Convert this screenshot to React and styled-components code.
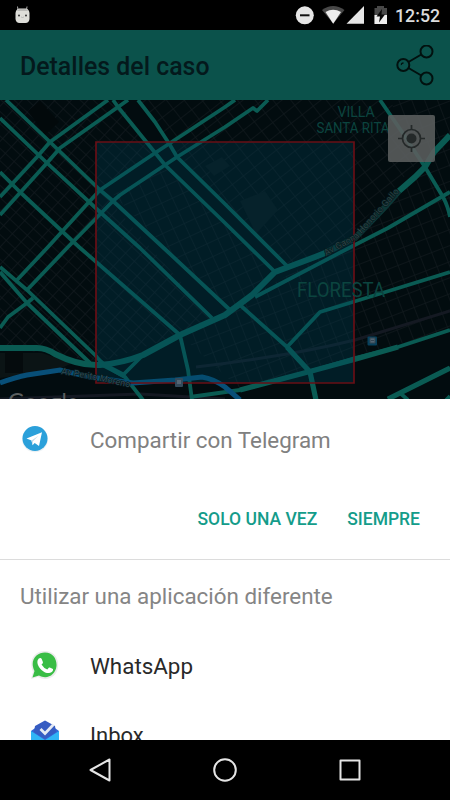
import React from 'react';
import styled, { createGlobalStyle } from 'styled-components';

const Global = createGlobalStyle`
  * { box-sizing: border-box; }
  body { margin: 0; background: #000; }
  svg { display: block; }
  button { border: 0; padding: 0; background: none; font: inherit; color: inherit; display: block; }
`;

const Screen = styled.main`
  width: 450px;
  height: 800px;
  display: flex;
  flex-direction: column;
  overflow: hidden;
  background: #fff;
  font-family: Roboto, sans-serif;
`;

const StatusBar = styled.header`
  height: 30px;
  flex: none;
  display: flex;
  align-items: center;
  padding: 0 10px 0 14px;
  background: #000;
  color: #dcdcdc;
`;

const StatusIcons = styled.div`
  display: flex;
  margin-left: auto;
`;

const Clock = styled.time`
  width: 45px;
  margin-left: 8px;
  padding-top: 1px;
  font-size: 17.8px;
  line-height: 30px;
  font-weight: 500;
  white-space: nowrap;
`;

const AppBar = styled.div`
  height: 70px;
  flex: none;
  display: flex;
  align-items: center;
  justify-content: space-between;
  padding: 1px 15px 0 20px;
  background: #0b524b;
`;

const Title = styled.h1`
  margin: 0;
  padding-top: 2px;
  font-size: 24.9px;
  line-height: 32px;
  font-weight: 500;
  color: #04191c;
`;

const MapView = styled.section`
  position: relative;
  height: 299px;
  flex: none;
  overflow: hidden;
  background: #020c0f;
`;

const MapCanvas = styled.svg`
  width: 450px;
  height: 299px;
`;

const LocateButton = styled.button`
  position: absolute;
  top: 15px;
  right: 15px;
  width: 47px;
  height: 47px;
  border-radius: 2px;
  background: rgba(91, 94, 94, 0.88);
`;

const Chosen = styled.section`
  height: 161px;
  flex: none;
  display: flex;
  flex-direction: column;
  justify-content: space-between;
  border-bottom: 1px solid #dcdcdc;
`;

const AppRow = styled.div`
  height: ${(p) => p.$height}px;
  flex: none;
  display: grid;
  grid-template-columns: ${(p) => p.$inset}px 1fr;
  align-items: center;
`;

const IconCell = styled.span`
  display: flex;
  padding-left: ${(p) => p.$left}px;
  padding-bottom: 2px;
`;

const Label = styled.span`
  font-size: ${(p) => p.$size || 22.4}px;
  line-height: 30px;
  color: ${(p) => (p.$muted ? '#808080' : '#292929')};
  white-space: nowrap;
`;

const Actions = styled.div`
  display: flex;
  justify-content: flex-end;
  gap: 30px;
  padding: 0 30px 28px 0;
`;

const Action = styled.button`
  font-size: 17.5px;
  line-height: 24px;
  font-weight: 500;
  color: #149c8a;
  white-space: nowrap;
`;

const Alternatives = styled.section`
  height: 180px;
  flex: none;
  overflow: hidden;
`;

const Subheading = styled.h2`
  height: 71px;
  margin: 0;
  padding: 21px 20px 0;
  font-size: 22.4px;
  line-height: 30px;
  font-weight: 400;
  color: #858585;
`;

const NavBar = styled.nav`
  height: 60px;
  flex: none;
  display: grid;
  grid-template-columns: repeat(3, 125px);
  justify-content: center;
  align-items: center;
  justify-items: center;
  background: #000;
`;

const highways = [
  'M450 135 L434 152 L425 167 L415 177 L399 191',
  'M325 253 L315 257 L275 272 L252 295 L225 315 L180 335 L143 355 C125 362 112 364 100 365 C83 366 65 359 55 354 Q46 348 37 348 L0 348',
];

const roads = [
  'M6 100 L50 142 L100 190 L113 201 L168 252 L230 310',
  'M0 118 L47 163 L100 212 L140 248 L212 318',
  'M0 172 L20 192 L79 247 L180 335',
  'M108 100 L50 142 L37 157 L0 197',
  'M128 100 L60 148 L47 163 L0 215',
  'M113 100 L118 107 L165 165 L225 223 L275 272',
  'M138 100 L155 122 L170 145 L177 157 L225 204 L288 267',
  'M235 100 L225 107 L155 153 L100 190 L88 203 L48 247 L17 280',
  'M268 100 L257 111 L253 108 L225 127 L177 157 L120 195 L113 201 L68 247 L27 290',
  'M380 100 L402 132 L425 167 L443 197 Q448 206 450 217',
  'M450 192 L388 228 L345 250 L255 297',
  'M450 272 L392 290 L320 312 L287 347',
  'M240 305 L287 347 L310 372 L316 400',
  'M450 330 L398 347 L355 358 L308 372 L240 390 L190 397',
  'M450 368 L388 399 M400 393 L408 400',
  'M450 396 L446 400',
  'M180 335 L188 370 L192 400',
  'M0 267 L27 290 L96 356 Q102 365 125 377 L143 400',
  'M0 272 L27 303 L90 363',
  'M33 298 L27 303 L8 317 L0 328',
  'M143 355 L122 376',
];

function StreetMap() {
  return (
    <MapCanvas viewBox="0 100 450 299" aria-label="Mapa">
      <defs>
        <pattern id="westBlocks" width="12" height="9" patternUnits="userSpaceOnUse" patternTransform="rotate(43)">
          <path d="M0 0H12M0 0V9" fill="none" stroke="#11191d" strokeWidth="1.6" />
        </pattern>
        <pattern id="northBlocks" width="12" height="14" patternUnits="userSpaceOnUse" patternTransform="rotate(52)">
          <path d="M0 0H12M0 0V14" fill="none" stroke="#11191d" strokeWidth="1.5" />
        </pattern>
        <pattern id="centralBlocks" width="12" height="14" patternUnits="userSpaceOnUse" patternTransform="rotate(-25)">
          <path d="M0 0H12M0 0V14" fill="none" stroke="#11191d" strokeWidth="1.5" />
        </pattern>
        <pattern id="eastBlocks" width="12" height="15" patternUnits="userSpaceOnUse" patternTransform="rotate(-21)">
          <path d="M0 0H12M0 0V15" fill="none" stroke="#11191d" strokeWidth="1.5" />
        </pattern>
        <path id="avenueNorth" d="M326 256 L357 239 L385 208 L401 190" />
        <path id="avenueWest" d="M61 374 L91 379 L133 388" />
      </defs>
      <path d="M0 100H118L155 153L100 190L212 318L180 335L100 362L0 346Z" fill="url(#westBlocks)" />
      <path d="M113 195L165 165L275 272L230 310Z" fill="url(#centralBlocks)" />
      <path d="M138 100H390L420 160L350 235L288 267L177 157Z" fill="url(#northBlocks)" />
      <path d="M390 100H450V330L240 389L180 335L252 295L355 238L420 170Z" fill="url(#eastBlocks)" />
      <path d="M28 111L40 101L59 122L45 135Z" fill="#02090b" />
      <path d="M0 353H42L72 363L58 370L0 378Z" fill="#0b1415" />
      <path d="M5 352H23V373H5Z" fill="#050b0d" />
      <path d="M205 166L222 157L230 166L214 176ZM240 201L265 191L278 210L256 234Z" fill="#091316" />
      <path d="M196 367Q290 356 355 340L450 311M0 399L140 394L225 399" fill="none" stroke="#141922" strokeWidth="3" />
      <g fill="none" stroke="#0a5b53" strokeWidth="3.8" strokeLinejoin="round">
        {roads.map((d) => <path key={d} d={d} />)}
      </g>
      <path d="M98 362L125 376M240 390L308 372L356 359L398 347M287 347L310 372L316 400M388 399L450 368" fill="none" stroke="#0a5b53" strokeWidth="5.2" />
      <g fill="none" stroke="#0a5b53" strokeWidth="6" strokeLinejoin="round">
        {highways.map((d) => <path key={d} d={d} />)}
      </g>
      <path d="M399 191L385 207L355 238L325 253" fill="none" stroke="#0d3736" strokeWidth="6" />
      <path d="M0 383Q16 377 27 375L60 370L90 377L133 383L175 380L202 377Q214 379 225 387L240 400" fill="none" stroke="#084f78" strokeWidth="5" />
      <path d="M96 142H354V383H96Z" fill="#00445c" fillOpacity=".3" stroke="#680f16" strokeWidth="1.7" />
      <g fill="#0b443f" fontFamily="Roboto, sans-serif" textAnchor="middle">
        <text x="356" y="117" fontSize="14.5" textLength="37" lengthAdjust="spacingAndGlyphs">VILLA</text>
        <text x="353" y="133" fontSize="14.5" textLength="73" lengthAdjust="spacingAndGlyphs">SANTA RITA</text>
        <text x="341" y="296.500" fontSize="19.5" textLength="88" lengthAdjust="spacingAndGlyphs">FLORESTA</text>
      </g>
      <g fill="#2d4547" stroke="#071a1d" strokeWidth="1.3" paintOrder="stroke" fontFamily="Roboto, sans-serif" fontSize="9">
        <text><textPath href="#avenueNorth" textLength="99">Av Gaona Honorio Gallo</textPath></text>
        <text fill="#2f4b55"><textPath href="#avenueWest" textLength="70">Av Perito Moreno</textPath></text>
      </g>
      <rect x="367.500" y="336.500" width="9.500" height="9" rx="1" fill="#07405c" />
      <path d="M370 338H375V343H370ZM371 340.500H374" fill="#536675" stroke="#344653" />
      <rect x="175" y="378" width="8" height="9" rx="1" fill="#334a5b" />
      <path d="M177 380H181V384H177Z" fill="#536675" />
      <text x="8" y="410" fontFamily="Lato, sans-serif" fontSize="22.5" fill="#5a5e5e">Google</text>
    </MapCanvas>
  );
}

function AndroidIcon() {
  return (
    <svg width="17" height="20" viewBox="0 0 17 20">
      <path d="M4 5L3.500 1.500M12.500 5L13 1.500" stroke="#aaa" strokeWidth="1" />
      <path d="M1.500 8Q2 4 5 3.500H12Q15 4 15.500 8V14Q15 18 11.500 18H5.500Q2 18 1.500 14Z" fill="#deded9" />
      <path d="M3 6Q4 4 6 4H11Q13.500 4 14 6Z" fill="#babab7" />
      <circle cx="5" cy="10.500" r="1" fill="#333" /><circle cx="12" cy="10.500" r="1" fill="#333" />
      <path d="M7 12Q8.500 13 10 12" fill="none" stroke="#aaa" strokeWidth=".7" />
    </svg>
  );
}

function SignalIcons() {
  return (
    <svg width="94" height="24" viewBox="293 3 94 24">
      <circle cx="304.800" cy="15.300" r="9" fill="#e6e6e6" />
      <path d="M300 15.300H309.500" stroke="#111" strokeWidth="2" />
      <path d="M322 10Q333 2 344.500 10L333.200 23.500Z" fill="#484848" />
      <path d="M325.500 12Q333 7.500 341 12L333.200 23.700Z" fill="#ececec" />
      <path d="M346.500 23.700L364 6V23.700Z" fill="#e6e6e6" />
      <path d="M374.500 8H377V6H384V8H387V24H374.500Z" fill="#484848" />
      <path d="M374.500 15H387V24H374.500Z" fill="#eee" />
      <path d="M382 9L376.500 16.500H380L379 22.500L385 14.500H381.500Z" fill="#080808" />
    </svg>
  );
}

function ShareIcon() {
  return (
    <svg width="40" height="42" viewBox="395 45 40 42" fill="none" stroke="#02110f" strokeWidth="2">
      <circle cx="426.500" cy="51.500" r="6" /><circle cx="403.300" cy="65" r="6" /><circle cx="426.500" cy="78.500" r="6" />
      <path d="M408.500 62L421.300 54.500M408.500 68L421.300 75.500" />
      <path d="M401.500 65Q401 63 403.500 63" strokeWidth="1.3" />
    </svg>
  );
}

function TelegramIcon() {
  return (
    <svg width="30" height="30" viewBox="20 424 30 30">
      <circle cx="35" cy="439.300" r="13" fill="#dfe7ec" opacity=".6" />
      <circle cx="35" cy="438.500" r="12.500" fill="#2ba0da" />
      <path d="M26.500 438.500L42 432.300L39 446L34.700 443L32.500 445.200L31.500 440.500Z" fill="#fff" />
      <path d="M31.500 440.500L38.500 435.800L33 441.300L32.500 445.200Z" fill="#c5dcea" />
    </svg>
  );
}

function WhatsAppIcon() {
  return (
    <svg width="30" height="30" viewBox="30 650 30 30">
      <path d="M31 679L33 672C27 657 38 650 46 651C55 652 59 659 58 667C57 677 47 682 38 677Z" fill="#ececec" />
      <path d="M32.500 677.500L34.500 671C29 660 37 652.500 45 652.500C53 652.500 57 659 56.500 666C55.500 675 47 680 39 675.500Z" fill="#39bd45" />
      <path d="M38.800 658.500Q41 657.500 41.700 659L43 662.200Q43 663.500 41.500 664.500Q44 668.500 47.300 669.500L49 667.500Q50 667 53 669C53.500 672 50 673.500 47 673C41 671.500 34.500 663 38.800 658.500Z" fill="#fff" />
    </svg>
  );
}

function InboxIcon() {
  return (
    <svg width="30" height="32" viewBox="30 719 30 32">
      <path d="M31 731L45 721L59 731V748H31Z" fill="#3367d6" />
      <path d="M31 731L45 740L59 731V749H31Z" fill="#31b5f5" />
      <path d="M35 726L45 720.500L55 726L56 732L45 739L34 732Z" fill="#365cc2" />
      <path d="M40.500 729L45 733.500L53.500 724.500" fill="none" stroke="#e5eaf4" strokeWidth="2.8" />
    </svg>
  );
}

function NavIcon({ children }) {
  return (
    <svg width="28" height="28" viewBox="0 0 28 28" fill="none" stroke="#e5e5e5" strokeWidth="2" strokeLinejoin="round">
      {children}
    </svg>
  );
}

export default function App() {
  return (
    <>
      <Global />
      <Screen>
        <StatusBar>
          <AndroidIcon />
          <StatusIcons><SignalIcons /></StatusIcons>
          <Clock>12:52</Clock>
        </StatusBar>
        <AppBar>
          <Title>Detalles del caso</Title>
          <button aria-label="Compartir"><ShareIcon /></button>
        </AppBar>
        <MapView>
          <StreetMap />
          <LocateButton aria-label="Mi ubicación">
            <svg width="47" height="47" viewBox="0 0 47 47" fill="none" stroke="#242929" strokeWidth="1.7">
              <circle cx="23.500" cy="23.500" r="9" /><circle cx="23.500" cy="23.500" r="5" fill="#242929" stroke="none" />
              <path d="M23.500 10V15M23.500 32V37M10 23.500H15M32 23.500H37" />
            </svg>
          </LocateButton>
        </MapView>
        <Chosen>
          <AppRow $height={81} $inset={90}>
            <IconCell $left={20}><TelegramIcon /></IconCell>
            <Label $muted>Compartir con Telegram</Label>
          </AppRow>
          <Actions><Action>SOLO UNA VEZ</Action><Action>SIEMPRE</Action></Actions>
        </Chosen>
        <Alternatives>
          <Subheading>Utilizar una aplicación diferente</Subheading>
          <AppRow $height={70} $inset={90}>
            <IconCell $left={30}><WhatsAppIcon /></IconCell>
            <Label>WhatsApp</Label>
          </AppRow>
          <AppRow $height={70} $inset={90}>
            <IconCell $left={30}><InboxIcon /></IconCell>
            <Label $size={22}>Inbox</Label>
          </AppRow>
        </Alternatives>
        <NavBar>
          <button aria-label="Atrás"><NavIcon><path d="M23.500 3.500V24.500L4.500 14Z" /></NavIcon></button>
          <button aria-label="Inicio"><NavIcon><circle cx="14" cy="14" r="10.800" /></NavIcon></button>
          <button aria-label="Recientes"><NavIcon><rect x="4.500" y="4.500" width="19" height="19" /></NavIcon></button>
        </NavBar>
      </Screen>
    </>
  );
}
